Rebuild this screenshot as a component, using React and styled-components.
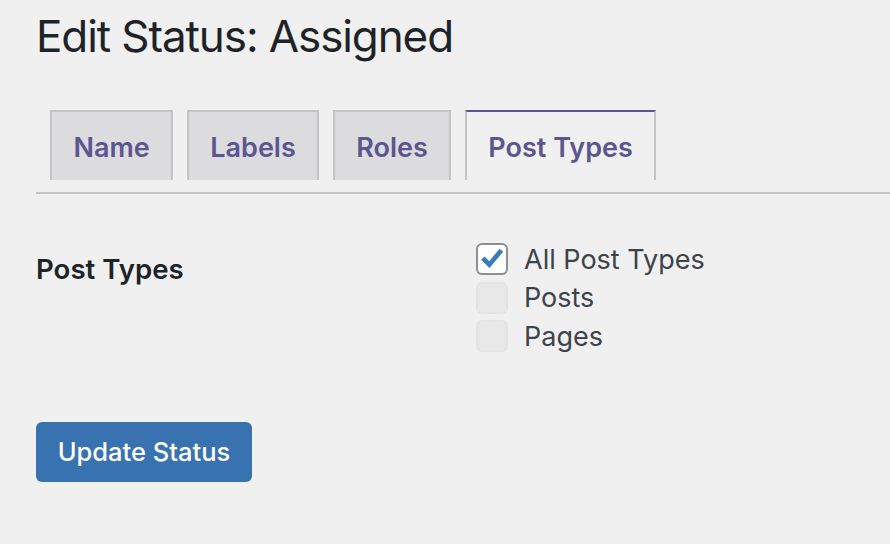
import React from "react";
import styled, { createGlobalStyle } from "styled-components";

const Global = createGlobalStyle`
  html, body { margin: 0; padding: 0; background: #f0f0f1; }
  body { font-family: Inter, "Noto Sans", "Liberation Sans", sans-serif; color: #1d2327; }
  * { box-sizing: border-box; }
`;

const Page = styled.div`
  width: 890px;
  height: 544px;
  padding: 7px 0 0 36px;
  overflow: hidden;
`;

const Title = styled.h1`
  margin: 0;
  font-size: 44px;
  font-weight: 400;
  line-height: 58px;
  color: #1d2327;
  letter-spacing: -1.1px;
`;

const TabBar = styled.nav`
  display: flex;
  gap: 13.5px;
  margin-top: 45px;
  padding: 0 0 12px 14px;
  border-bottom: 2px solid #c3c4c7;
`;

const Tab = styled.a`
  display: flex;
  align-items: center;
  height: 70px;
  padding: 2px 21.5px 0;
  border: 2px solid #c3c4c7;
  border-bottom: none;
  border-top-color: ${(p) => (p.$active ? "#5b5591" : "#c3c4c7")};
  background: ${(p) => (p.$active ? "#f0f0f1" : "#dcdcde")};
  color: #5b5591;
  font-size: 27px;
  font-weight: 600;
  text-decoration: none;
  cursor: pointer;
`;

const FormRow = styled.div`
  display: flex;
  margin-top: 46px;
`;

const Label = styled.div`
  width: 440px;
  font-size: 27.6px;
  font-weight: 600;
  padding-top: 10px;
  line-height: 38px;
`;

const Options = styled.div`
  display: flex;
  flex-direction: column;
`;

const Option = styled.label`
  display: flex;
  align-items: center;
  gap: 16px;
  height: 38.5px;
  font-size: 27px;
  color: #3c434a;
`;

const Box = styled.span`
  width: 32px;
  height: 32px;
  border-radius: 6px;
  display: flex;
  align-items: center;
  justify-content: center;
  border: 2px solid ${(p) => (p.$disabled ? "#e3e3e4" : "#8c8f94")};
  background: ${(p) =>
    p.$disabled
      ? "radial-gradient(circle, #e4e4e5 0.6px, #efeff0 0.9px) 0 0 / 2px 2px"
      : "#ffffff"};
  flex: none;
`;

const Button = styled.button`
  margin-top: 66px;
  width: 216px;
  height: 60px;
  border: none;
  border-radius: 6px;
  background: #3872b0;
  color: #ffffff;
  font-family: inherit;
  font-size: 25.5px;
  font-weight: 500;
  padding: 0;
  cursor: pointer;
`;

const Check = () => (
  <svg width="30" height="30" viewBox="0 0 20 20">
    <path
      d="M2.2 10.6 L4.7 8.3 L8 11.6 L15.4 2.6 L18 4.8 L8.2 16.4 Z"
      fill="#3a79bf"
    />
  </svg>
);

export default function App() {
  const options = [
    { label: "All Post Types", checked: true },
    { label: "Posts", disabled: true },
    { label: "Pages", disabled: true },
  ];
  return (
    <Page>
      <Global />
      <Title>Edit Status: Assigned</Title>
      <TabBar>
        <Tab>Name</Tab>
        <Tab>Labels</Tab>
        <Tab>Roles</Tab>
        <Tab $active>Post Types</Tab>
      </TabBar>
      <FormRow>
        <Label>Post Types</Label>
        <Options>
          {options.map((o) => (
            <Option key={o.label}>
              <Box $disabled={o.disabled}>{o.checked && <Check />}</Box>
              {o.label}
            </Option>
          ))}
        </Options>
      </FormRow>
      <Button>Update Status</Button>
    </Page>
  );
}
